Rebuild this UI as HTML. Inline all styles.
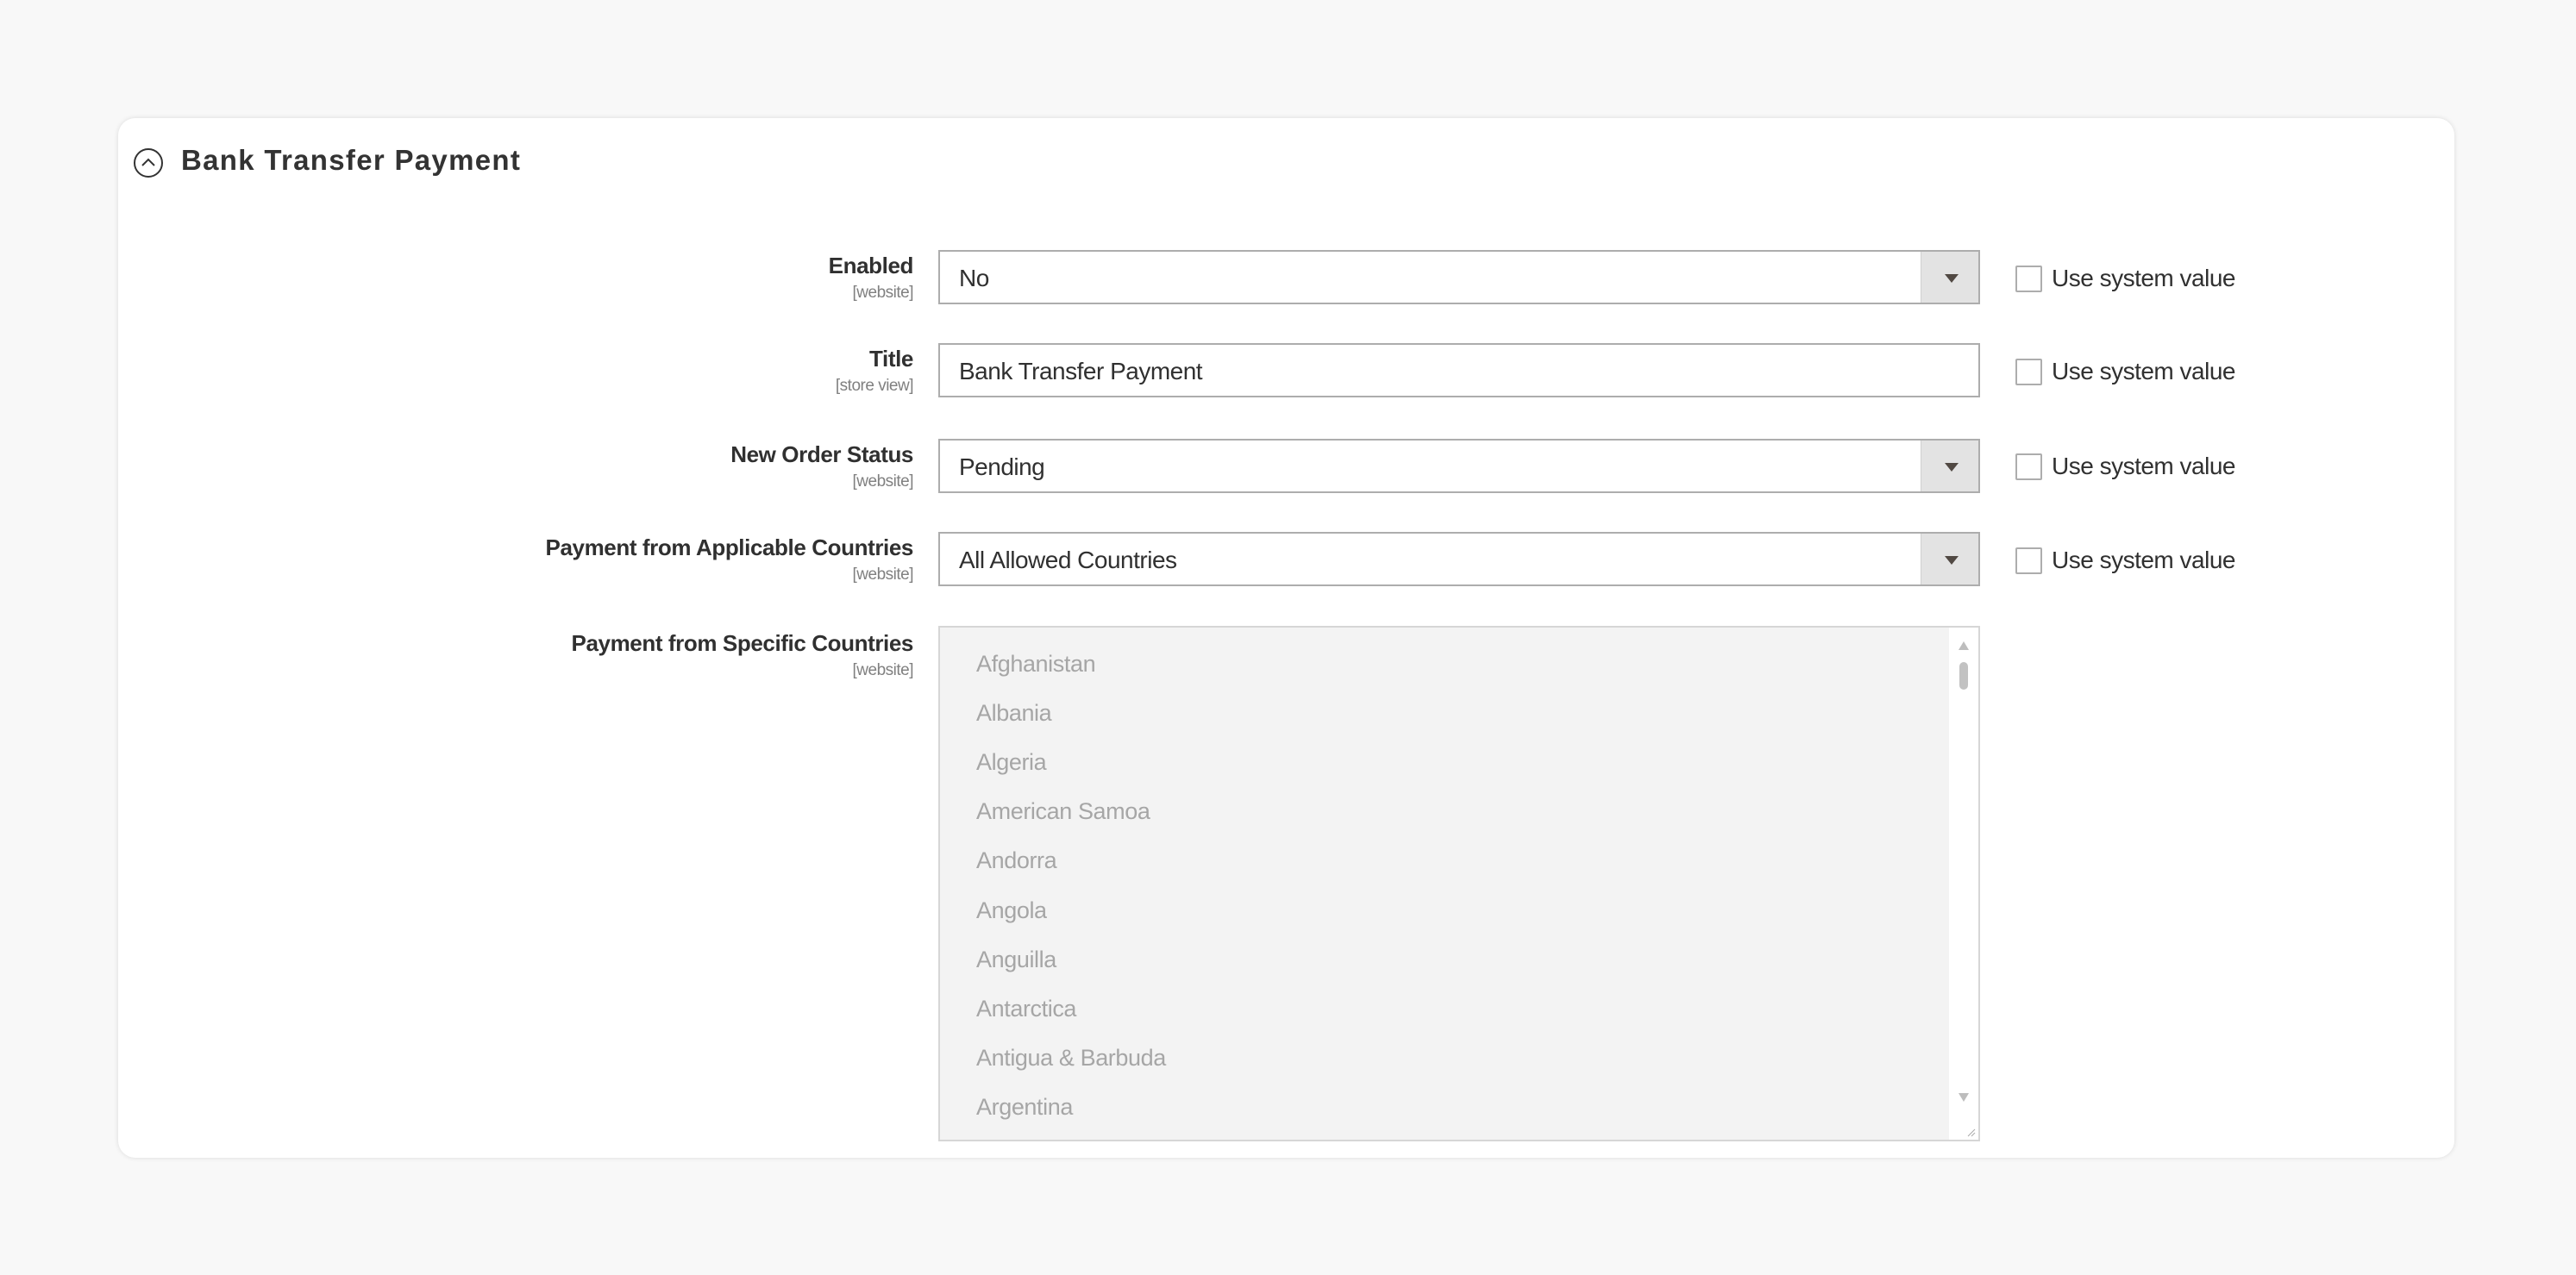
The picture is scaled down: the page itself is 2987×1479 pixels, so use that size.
<!DOCTYPE html>
<html><head><meta charset="utf-8"><style>
*{box-sizing:border-box;margin:0;padding:0}
body{width:2987px;height:1479px;background:#f8f8f8;font-family:"Liberation Sans",sans-serif;position:relative;overflow:hidden;color:#303030}
.panel{position:absolute;left:137px;top:137px;width:2709px;height:1206px;background:#fff;border-radius:20px;box-shadow:0 0 6px rgba(0,0,0,.12)}
.h{position:absolute;left:210px;top:167px;font-size:33px;font-weight:bold;color:#333;letter-spacing:1.3px}
.ic{position:absolute;left:155px;top:172px;width:34px;height:34px;border:2px solid #333;border-radius:50%}
.lab{position:absolute;right:1928px;text-align:right;font-size:26px;font-weight:bold;color:#303030;white-space:nowrap;letter-spacing:-0.4px}
.lab small{display:block;font-size:19px;font-weight:normal;color:#808080;margin-top:5px;letter-spacing:-0.5px}
.inp{position:absolute;left:1088px;width:1208px;height:63px;border:2px solid #adadad;background:#fff;font-size:28px;line-height:62px;padding-left:22px;color:#303030;letter-spacing:-0.5px}
.btn{position:absolute;right:0;top:0;width:67px;height:59px;background:#e3e3e3;border-left:1px solid #d0d0d0}
.btn:after{content:"";position:absolute;left:27px;top:26px;border-left:8px solid transparent;border-right:8px solid transparent;border-top:10px solid #514943}
.cb{position:absolute;left:2337px;width:31px;height:31px;border:2px solid #adadad;border-radius:2px;background:#fff}
.cbt{position:absolute;left:2379px;font-size:28px;color:#303030;letter-spacing:-0.5px}
.ms{position:absolute;left:1088px;top:726px;width:1208px;height:598px;border:2px solid #d6d6d6;background:#f3f3f3}
.ms div{position:absolute;left:42px;font-size:27px;color:#a6a6a6;letter-spacing:-0.4px}
.sb{position:absolute;right:0;top:0;width:34px;height:594px;background:#fff}
</style></head><body>
<div class="panel"></div>
<div class="ic"><svg width="30" height="30" style="position:absolute;left:0;top:0"><path d="M8 18 L15 11 L22 18" fill="none" stroke="#333" stroke-width="2"/></svg></div>
<div class="h">Bank Transfer Payment</div>

<div class="lab" style="top:293px">Enabled<small>[website]</small></div>
<div class="inp" style="top:290px">No<span class="btn"></span></div>
<div class="cb" style="top:308px"></div><div class="cbt" style="top:307px">Use system value</div>

<div class="lab" style="top:401px">Title<small>[store view]</small></div>
<div class="inp" style="top:398px">Bank Transfer Payment</div>
<div class="cb" style="top:416px"></div><div class="cbt" style="top:415px">Use system value</div>

<div class="lab" style="top:512px">New Order Status<small>[website]</small></div>
<div class="inp" style="top:509px">Pending<span class="btn"></span></div>
<div class="cb" style="top:526px"></div><div class="cbt" style="top:525px">Use system value</div>

<div class="lab" style="top:620px">Payment from Applicable Countries<small>[website]</small></div>
<div class="inp" style="top:617px">All Allowed Countries<span class="btn"></span></div>
<div class="cb" style="top:635px"></div><div class="cbt" style="top:634px">Use system value</div>

<div class="lab" style="top:731px">Payment from Specific Countries<small>[website]</small></div>
<div class="ms">
<div style="top:27px">Afghanistan</div>
<div style="top:84px">Albania</div>
<div style="top:141px">Algeria</div>
<div style="top:198px">American Samoa</div>
<div style="top:255px">Andorra</div>
<div style="top:313px">Angola</div>
<div style="top:370px">Anguilla</div>
<div style="top:427px">Antarctica</div>
<div style="top:484px">Antigua &amp; Barbuda</div>
<div style="top:541px">Argentina</div>
<span class="sb">
<svg width="34" height="594" style="position:absolute;left:0;top:0">
<path d="M11 26 L17 16 L23 26 Z" fill="#bdbdbd"/>
<rect x="12" y="40" width="10" height="32" rx="5" fill="#c2c2c2"/>
<path d="M11 540 L17 550 L23 540 Z" fill="#bdbdbd"/>
<path d="M22 590 L30 582 M26 590 L30 586" stroke="#aaa" stroke-width="1"/>
</svg></span>
</div>
</body></html>
